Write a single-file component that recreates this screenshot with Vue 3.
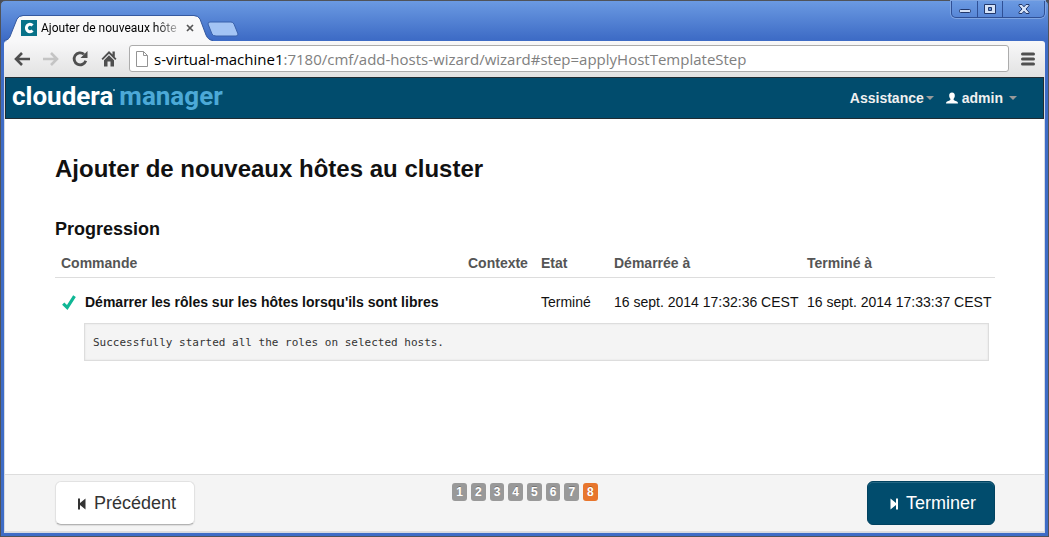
<script setup>
import { ref } from 'vue'

const pageHost = 's-virtual-machine1'
const pagePath = ':7180/cmf/add-hosts-wizard/wizard#step=applyHostTemplateStep'
const address = ref(pageHost + pagePath)

const steps = [1, 2, 3, 4, 5, 6, 7, 8]
const current = 8

const commands = [
  {
    name: "Démarrer les rôles sur les hôtes lorsqu'ils sont libres",
    context: '',
    state: 'Terminé',
    started: '16 sept. 2014 17:32:36 CEST',
    ended: '16 sept. 2014 17:33:37 CEST',
    message: 'Successfully started all the roles on selected hosts.'
  }
]
</script>

<template>
  <div class="window">
    <div class="titlebar">
      <div class="tab">
        <svg class="tab-shape" viewBox="0 0 202 26" preserveAspectRatio="none" aria-hidden="true">
          <path d="M0 26 C5 25 6 22 7 19 L13 4 Q15 1 19 1 H190 Q194 1 196 4 L202 20 Q204 25 209 26 Z" fill="#f8f8f9" />
          <path d="M0 25.5 C5 25 6 22 7 19 L13 4 Q15 0.5 19 0.5 H190 Q194 0.5 196 4 L202 20 Q204 25 209 25.500" fill="none" stroke="#35599f" />
        </svg>
        <svg class="favicon" viewBox="0 0 16 16" aria-hidden="true">
          <rect width="16" height="16" fill="#087289" />
          <path d="M11.500 5.500A3.500 3.700 0 1 0 11.500 10.500" fill="none" stroke="#fff" stroke-width="3" />
        </svg>
        <span class="tab-title">Ajouter de nouveaux hôte</span>
        <button class="tab-close" type="button" aria-label="Fermer l'onglet">
          <svg viewBox="0 0 8 8" width="8" height="8"><path d="M1 1L7 7M7 1L1 7" stroke="#555" stroke-width="1.7" /></svg>
        </button>
      </div>
      <button class="new-tab" type="button" aria-label="Nouvel onglet">
        <svg viewBox="0 0 32 16" width="32" height="16">
          <path d="M3 1H24Q26 1 27 3L31 13Q31 15 29 15H9Q6 15 5 13L1 3Q1 1 3 1Z" fill="#a3c4f4" stroke="#3961ab" />
        </svg>
      </button>
      <div class="controls">
        <button type="button" aria-label="Réduire">
          <svg viewBox="0 0 14 12" width="14" height="12"><rect x="1.5" y="6.5" width="11" height="3" rx="1" fill="#d5e2f7" stroke="#22386b" /></svg>
        </button>
        <button type="button" aria-label="Agrandir">
          <svg viewBox="0 0 14 12" width="14" height="12"><path d="M1.500 1.500H12.500V10.500H1.500ZM5.500 4.500V7.500H8.500V4.500Z" fill="#d5e2f7" fill-rule="evenodd" stroke="#22386b" /></svg>
        </button>
        <button type="button" class="wide" aria-label="Fermer">
          <svg viewBox="0 0 14 12" width="14" height="12"><path d="M2 1.500H5L7 3.800L9 1.500H12V2.800L9 6L12 9.200V10.500H9L7 8.200L5 10.500H2V9.200L5 6L2 2.800Z" fill="#d5e2f7" stroke="#22386b" /></svg>
        </button>
      </div>
    </div>

    <div class="toolbar">
      <button type="button" aria-label="Précédente">
        <svg viewBox="0 0 18 18" width="18" height="18"><path d="M17 9H3M9 3L3 9L9 15" fill="none" stroke="#4f4f4f" stroke-width="2.600" /></svg>
      </button>
      <button type="button" aria-label="Suivante">
        <svg viewBox="0 0 18 18" width="18" height="18"><path d="M1 9H15M9 3L15 9L9 15" fill="none" stroke="#c4c4c4" stroke-width="2.600" /></svg>
      </button>
      <button type="button" aria-label="Actualiser">
        <svg viewBox="0 0 18 18" width="18" height="18"><path d="M14.800 10.800A6 6 0 1 1 13 4.200" fill="none" stroke="#4f4f4f" stroke-width="2.800" /><path d="M16.500 1V8H9.500Z" fill="#4f4f4f" /></svg>
      </button>
      <button type="button" aria-label="Accueil">
        <svg viewBox="0 0 18 18" width="18" height="18"><path d="M9 1L1.500 8.700L2.800 10L9 3.800L15.200 10L16.500 8.700L14.800 7V1.500H12.500V4.500ZM4 10.200L9 5.300L14 10.200V16.500H10.500V11.500H7.500V16.500H4Z" fill="#4f4f4f" /></svg>
      </button>
      <label class="omnibox">
        <svg viewBox="0 0 12 16" width="12" height="16" aria-hidden="true"><path d="M0.500 0.500H7.500L11.500 4.500V15.500H0.500ZM7.500 0.500V4.500H11.500" fill="#fff" stroke="#949494" /></svg>
        <span class="url">
          <span class="url-text" aria-hidden="true"><b>{{ pageHost }}</b>{{ pagePath }}</span>
          <input v-model="address" type="text" aria-label="Adresse" spellcheck="false" />
        </span>
      </label>
      <button type="button" class="menu" aria-label="Menu">
        <svg viewBox="0 0 14 14" width="14" height="14"><path d="M1.500 2H12.500M1.500 7H12.500M1.500 12H12.500" stroke="#505050" stroke-width="3" stroke-linecap="round" /></svg>
      </button>
    </div>

    <div class="page">
      <header class="navbar">
        <a class="brand" href="#"><span>cloudera</span><i></i><em>manager</em></a>
        <nav>
          <button type="button">Assistance<i class="caret"></i></button>
          <button type="button" class="user">
            <svg viewBox="0 0 12 12" width="12" height="12" aria-hidden="true"><path d="M6 0.500C8 0.500 9 2 8.800 4C8.700 5.500 8 6.300 7.500 7C7.500 8.500 9 8.500 11 9.500Q12 10 12 11.500H0Q0 10 1 9.500C3 8.500 4.500 8.500 4.500 7C4 6.300 3.300 5.500 3.200 4C3 2 4 0.500 6 0.500Z" fill="#fff" /></svg>
            admin<i class="caret"></i>
          </button>
        </nav>
      </header>

      <main>
        <h1>Ajouter de nouveaux hôtes au cluster</h1>
        <h2 id="progress-title">Progression</h2>
        <table aria-labelledby="progress-title">
          <colgroup>
            <col />
            <col class="col-short" />
            <col class="col-short" />
            <col class="col-start" />
            <col class="col-end" />
          </colgroup>
          <thead>
            <tr>
              <th scope="col">Commande</th>
              <th scope="col">Contexte</th>
              <th scope="col">Etat</th>
              <th scope="col">Démarrée à</th>
              <th scope="col">Terminé à</th>
            </tr>
          </thead>
          <tbody v-for="command in commands" :key="command.name">
            <tr>
              <td>
                <div class="command">
                  <svg viewBox="0 0 14 16" width="14" height="16" aria-hidden="true"><path d="M1.200 9.700L5.200 13.500L12.500 2.200" fill="none" stroke="#0fb795" stroke-width="3.200" /></svg>
                  <strong>{{ command.name }}</strong>
                </div>
              </td>
              <td>{{ command.context }}</td>
              <td>{{ command.state }}</td>
              <td>{{ command.started }}</td>
              <td>{{ command.ended }}</td>
            </tr>
            <tr>
              <td colspan="5" class="message"><pre>{{ command.message }}</pre></td>
            </tr>
          </tbody>
        </table>
      </main>

      <footer>
        <div class="side">
          <button type="button" class="btn">
            <svg viewBox="0 0 8 12" width="8" height="12" aria-hidden="true"><path d="M0 0.500H2V5L7.500 0.500V11.500L2 7V11.500H0Z" fill="#333" /></svg>
            Précédent
          </button>
        </div>
        <ol>
          <li v-for="step in steps" :key="step" :class="{ active: step === current }">{{ step }}</li>
        </ol>
        <div class="side end">
          <button type="button" class="btn primary">
            <svg viewBox="0 0 8 12" width="8" height="12" aria-hidden="true"><path d="M8 0.500H6V5L0.500 0.500V11.500L6 7V11.500H8Z" fill="#fff" /></svg>
            Terminer
          </button>
        </div>
      </footer>
    </div>
  </div>
</template>

<style>
body {
  background: #4a4d55;
}
</style>

<style scoped>
* {
  box-sizing: border-box;
}
button {
  margin: 0;
  padding: 0;
  border: 0;
  background: none;
  font: inherit;
  color: inherit;
}
svg {
  display: block;
  flex: none;
}
.window {
  display: flex;
  flex-direction: column;
  min-height: 100vh;
  padding: 0 3px 3px;
  border: 1px solid #505359;
  border-radius: 5px 5px 0 0;
  background: linear-gradient(#6b9ae2 0, #3e6cc6 38px, #3e6cc6);
  font-family: "Liberation Sans", Arial, sans-serif;
  font-size: 14px;
  line-height: 20px;
  color: #111;
}

/* Browser frame */
.titlebar {
  display: flex;
  align-items: flex-end;
  height: 40px;
}
.tab {
  position: relative;
  display: flex;
  align-items: center;
  width: 202px;
  height: 26px;
  padding: 0 11px 0 17px;
}
.tab-shape {
  position: absolute;
  inset: 0;
  width: 100%;
  height: 100%;
  overflow: visible;
}
.favicon {
  position: relative;
  width: 16px;
  height: 16px;
}
.tab-title {
  position: relative;
  width: 138px;
  margin-left: 4px;
  white-space: nowrap;
  font-family: Roboto, "Segoe UI", sans-serif;
  font-size: 12px;
  line-height: 16px;
  color: #000;
  mask-image: linear-gradient(to right, #000 114px, transparent 144px);
}
.tab-close {
  position: relative;
  margin-left: 7px;
}
.new-tab {
  margin: 0 0 4px 1px;
}
.controls {
  display: flex;
  align-self: flex-start;
  margin-left: auto;
  border: 1px solid #2f5096;
  border-top: 0;
  border-radius: 0 0 5px 5px;
  box-shadow: 0 0 0 1px #7fa5e2;
}
.controls button {
  display: flex;
  align-items: center;
  justify-content: center;
  width: 25px;
  height: 16px;
}
.controls button + button {
  border-left: 1px solid #2f5096;
}
.controls .wide {
  width: 42px;
}
.toolbar {
  display: flex;
  align-items: center;
  gap: 11px;
  height: 36px;
  padding: 0 10px 1px 9px;
  border-radius: 3px 3px 0 0;
  background: linear-gradient(#f8f8f9, #e2e2e2);
}
.omnibox {
  display: flex;
  flex: 1;
  align-items: center;
  gap: 6px;
  height: 27px;
  padding: 0 6px;
  border: 1px solid #acacac;
  border-radius: 3px;
  background: #fff;
  font-family: "Open Sans", "Segoe UI", sans-serif;
  font-size: 15px;
  line-height: 22px;
}
.url {
  position: relative;
  flex: 1;
  min-width: 0;
  overflow: hidden;
}
.url-text {
  display: block;
  white-space: nowrap;
  color: #808080;
}
.url-text b {
  font-weight: 400;
  color: #000;
}
.url input {
  position: absolute;
  inset: 0;
  width: 100%;
  padding: 0;
  border: 0;
  outline: 0;
  background: none;
  font: inherit;
  color: transparent;
  caret-color: #000;
}
.menu {
  margin-left: 1px;
}

/* Application */
.page {
  display: flex;
  flex: 1;
  flex-direction: column;
  border: 1px solid #d5dae2;
  border-top: 0;
  background: #fff;
}
.navbar {
  display: flex;
  align-items: center;
  justify-content: space-between;
  height: 42px;
  padding: 0 26px 0 6px;
  border: 1px solid #202c33;
  background: #014c6d;
  color: #f0f0f0;
  font-weight: 700;
}
.brand {
  display: flex;
  margin-bottom: 4px;
  font-family: Roboto, sans-serif;
  font-size: 26px;
  line-height: 30px;
  color: #fff;
  text-decoration: none;
}
.brand i {
  width: 2px;
  height: 2px;
  margin: 8px 4px 0 0;
  border-radius: 50%;
  background: #a9c3d0;
}
.brand em {
  font-style: normal;
  color: #4ca9d7;
}
nav,
nav button {
  display: flex;
  align-items: center;
}
nav {
  gap: 12px;
}
.caret {
  margin-left: 2px;
  border: 4px solid transparent;
  border-top-color: #999;
  border-bottom: 0;
}
.user {
  gap: 4px;
}
main {
  flex: 1;
  padding: 35px 49px 24px 50px;
}
h1 {
  margin: 0;
  font-size: 24px;
  line-height: 30px;
}
h2 {
  margin: 33px 0 9px;
  font-size: 18px;
  line-height: 24px;
}
table {
  width: 100%;
  table-layout: fixed;
  border-collapse: collapse;
}
.col-short {
  width: 73px;
}
.col-start {
  width: 193px;
}
.col-end {
  width: 194px;
}
th,
td {
  padding: 3px 6px;
  text-align: left;
  white-space: nowrap;
}
th {
  padding-bottom: 4px;
  border-bottom: 1px solid #ddd;
  color: #555;
}
tbody td {
  padding-top: 14px;
}
.command {
  display: flex;
  align-items: center;
  gap: 9px;
  padding-left: 1px;
}
tbody .message {
  padding: 8px 6px 8px 29px;
}
pre {
  margin: 0;
  padding: 9px 8px 7px;
  border: 1px solid #ddd;
  background: #f4f4f4;
  box-shadow: inset 0 0 2px #ddd;
  font-family: "DejaVu Sans Mono", monospace;
  font-size: 11px;
  line-height: 20px;
  color: #333;
}
footer {
  display: flex;
  align-items: flex-start;
  padding: 6px 49px 6px 50px;
  border: 1px solid #ddd;
  border-width: 1px 0;
  background: #f4f4f4;
}
.side {
  display: flex;
  flex: 1;
}
.end {
  justify-content: flex-end;
}
.btn {
  display: flex;
  align-items: center;
  gap: 8px;
  height: 44px;
  padding: 0 18px 0 22px;
  border: 1px solid #e2e2e2;
  border-bottom-color: #b3b3b3;
  border-radius: 6px;
  background: #fff;
  font-size: 18px;
  line-height: 24px;
  color: #333;
  box-shadow: 0 1px 1px #ddd;
}
.btn svg {
  margin-top: 2px;
}
.btn.primary {
  border-color: #014260;
  background: #014c6d;
  color: #fff;
  box-shadow: inset 0 1px 0 #246784;
}
ol {
  display: flex;
  gap: 4px;
  margin: 2px 0 0;
  padding: 0;
  list-style: none;
}
li {
  padding: 2px 4px;
  border-radius: 3px;
  background: #999;
  font-size: 12px;
  font-weight: 700;
  line-height: 14px;
  color: #fff;
  text-shadow: 0 -1px 0 rgba(0, 0, 0, 0.25);
}
.active {
  background: #e8762d;
}
</style>
